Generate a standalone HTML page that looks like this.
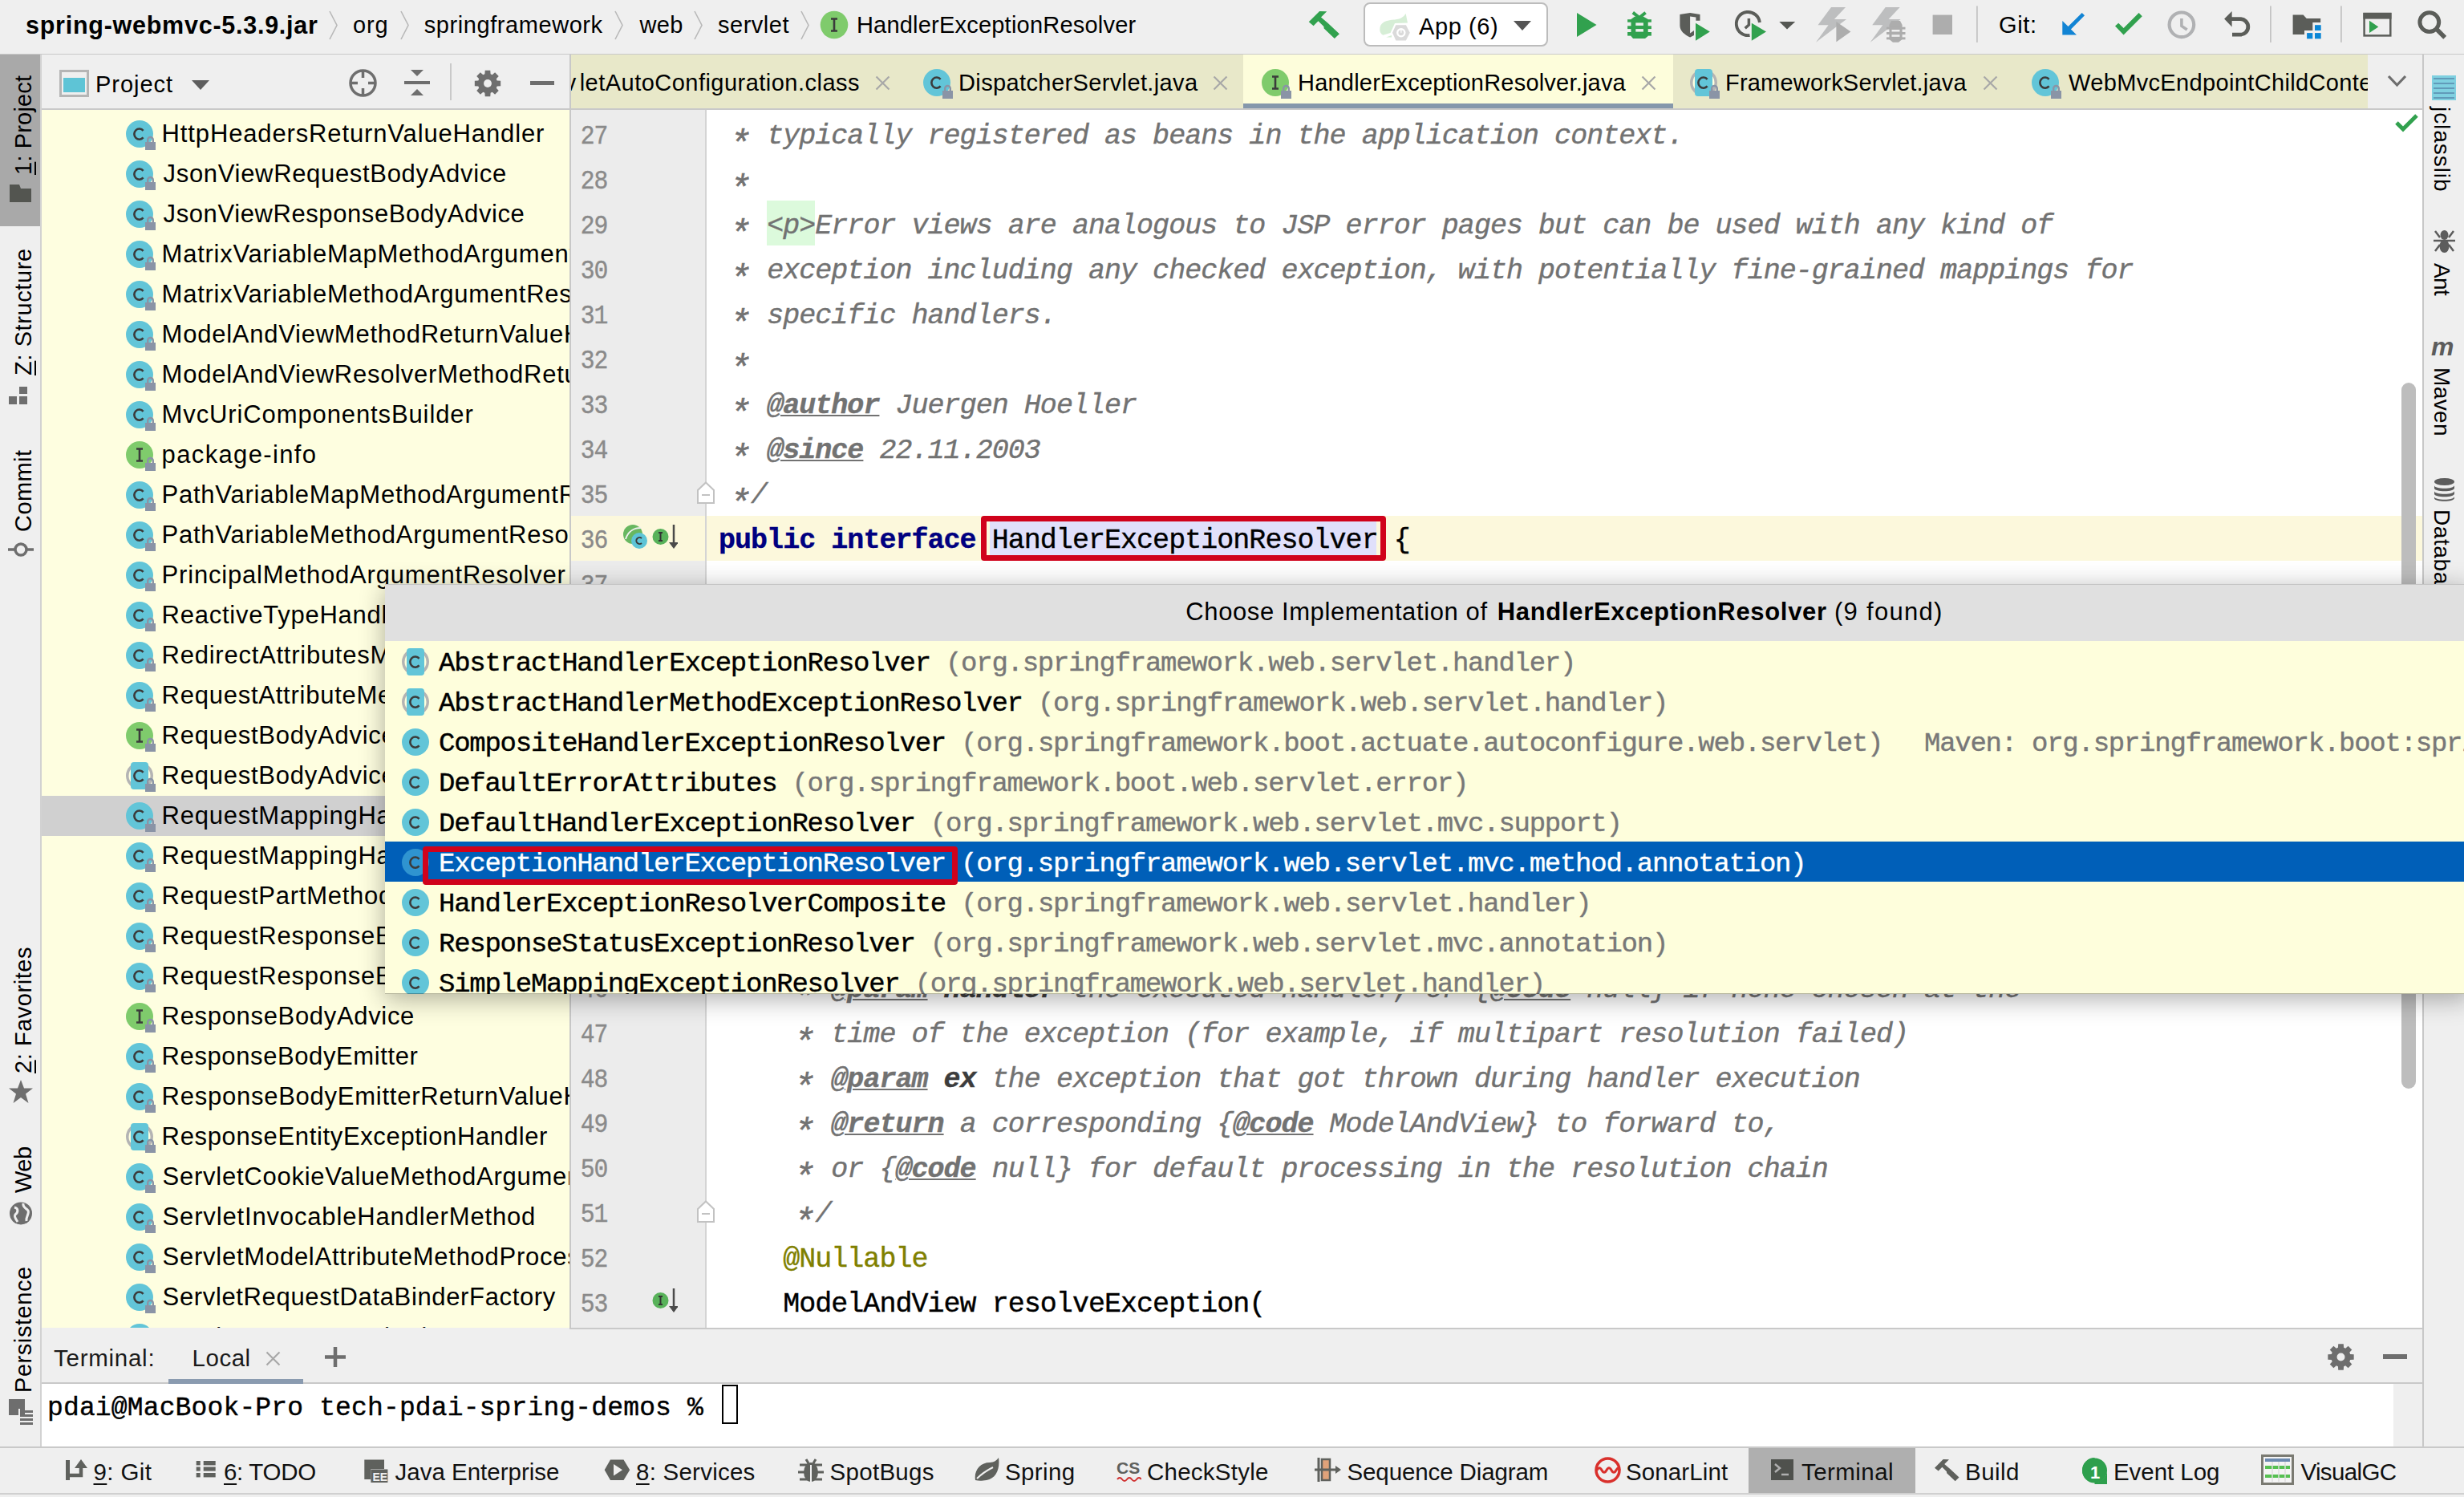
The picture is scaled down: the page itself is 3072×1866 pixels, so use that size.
<!DOCTYPE html>
<html><head><meta charset="utf-8"><style>
html,body{margin:0;padding:0;}
body{width:3072px;height:1866px;position:relative;overflow:hidden;background:#efefef;font-family:'Liberation Sans',sans-serif;}
body div, body svg{position:absolute;}

</style></head><body>
<div style="left:0px;top:0px;width:3072px;height:66px;background:#efefef;"></div>
<div style="left:0px;top:67px;width:3072px;height:2px;background:#c9c9c9;"></div>
<div style="left:0px;top:68px;width:50px;height:1736px;background:#efefef;"></div>
<div style="left:0px;top:68px;width:50px;height:214px;background:#a9a9a9;"></div>
<div style="left:50px;top:68px;width:2px;height:1736px;background:#d2d2d2;"></div>
<div style="left:52px;top:68px;width:659px;height:67px;background:#efefef;"></div>
<div style="left:52px;top:135px;width:659px;height:2px;background:#c9c9c9;"></div>
<div style="left:52px;top:137px;width:658px;height:1518px;background:#fefee0;"></div>
<div style="left:52px;top:992px;width:658px;height:50px;background:#d0d0d0;"></div>
<div style="left:710px;top:68px;width:2px;height:1589px;background:#c8c8c8;"></div>
<div style="left:712px;top:68px;width:2308px;height:67px;background:#efefef;"></div>
<div style="left:712px;top:68px;width:2240px;height:67px;background:#e8e8c9;"></div>
<div style="left:1550px;top:68px;width:536px;height:67px;background:#fdfddb;"></div>
<div style="left:1550px;top:129px;width:536px;height:7px;background:#8597ab;"></div>
<div style="left:712px;top:135px;width:2308px;height:2px;background:#c9c9c9;"></div>
<div style="left:712px;top:137px;width:167px;height:1518px;background:#ececec;"></div>
<div style="left:879px;top:137px;width:2px;height:1518px;background:#d4d4d4;"></div>
<div style="left:881px;top:137px;width:2139px;height:1518px;background:#ffffff;"></div>
<div style="left:712px;top:643px;width:167px;height:56px;background:#fcf8dc;"></div>
<div style="left:881px;top:643px;width:2139px;height:56px;background:#fcf8dc;"></div>
<div style="left:712px;top:1655px;width:2308px;height:2px;background:#c9c9c9;"></div>
<div style="left:3020px;top:68px;width:2px;height:1736px;background:#c8c8c8;"></div>
<div style="left:3022px;top:68px;width:50px;height:1736px;background:#efefef;"></div>
<div style="left:52px;top:1657px;width:2968px;height:66px;background:#efefef;"></div>
<div style="left:52px;top:1723px;width:2968px;height:2px;background:#c9c9c9;"></div>
<div style="left:52px;top:1725px;width:2932px;height:78px;background:#ffffff;"></div>
<div style="left:2984px;top:1725px;width:36px;height:78px;background:#efefef;"></div>
<div style="left:0px;top:1803px;width:3072px;height:2px;background:#c9c9c9;"></div>
<div style="left:0px;top:1805px;width:3072px;height:61px;background:#efefef;"></div>
<div style="left:2180px;top:1805px;width:208px;height:56px;background:#afafaf;"></div>
<div style="left:0px;top:1861px;width:3072px;height:2px;background:#d0d0d0;"></div>
<div style="left:32.00px;top:16.28px;font-family:'Liberation Sans';font-size:30.5px;line-height:30.5px;font-weight:bold;font-style:normal;color:#000;letter-spacing:0.745px;white-space:pre;">spring-webmvc-5.3.9.jar</div>
<svg style="left:410px;top:13px;" width="11" height="37" viewBox="0 0 11 37"><path d="M1 1 L10 18.5 L1 36" fill="none" stroke="#b8b8b8" stroke-width="1.6"/></svg>
<svg style="left:498.5px;top:13px;" width="11" height="37" viewBox="0 0 11 37"><path d="M1 1 L10 18.5 L1 36" fill="none" stroke="#b8b8b8" stroke-width="1.6"/></svg>
<svg style="left:766px;top:13px;" width="11" height="37" viewBox="0 0 11 37"><path d="M1 1 L10 18.5 L1 36" fill="none" stroke="#b8b8b8" stroke-width="1.6"/></svg>
<svg style="left:864.7px;top:13px;" width="11" height="37" viewBox="0 0 11 37"><path d="M1 1 L10 18.5 L1 36" fill="none" stroke="#b8b8b8" stroke-width="1.6"/></svg>
<svg style="left:998px;top:13px;" width="11" height="37" viewBox="0 0 11 37"><path d="M1 1 L10 18.5 L1 36" fill="none" stroke="#b8b8b8" stroke-width="1.6"/></svg>
<div style="left:440.00px;top:17.15px;font-family:'Liberation Sans';font-size:29px;line-height:29px;font-weight:normal;font-style:normal;color:#000;letter-spacing:0.807px;white-space:pre;">org</div>
<div style="left:528.80px;top:17.15px;font-family:'Liberation Sans';font-size:29px;line-height:29px;font-weight:normal;font-style:normal;color:#000;letter-spacing:0.568px;white-space:pre;">springframework</div>
<div style="left:797.60px;top:17.15px;font-family:'Liberation Sans';font-size:29px;line-height:29px;font-weight:normal;font-style:normal;color:#000;letter-spacing:0.264px;white-space:pre;">web</div>
<div style="left:895.00px;top:17.15px;font-family:'Liberation Sans';font-size:29px;line-height:29px;font-weight:normal;font-style:normal;color:#000;letter-spacing:0.507px;white-space:pre;">servlet</div>
<svg style="left:1020px;top:11px;" width="44" height="44" viewBox="0 0 44 44"><circle cx="20" cy="20" r="17.3" fill="#7fcb6c"/><path d="M16 12.5 h8 M20 12.5 v15 M16 27.5 h8" fill="none" stroke="#3b3b3b" stroke-width="2.6"/></svg>
<div style="left:1067.90px;top:17.15px;font-family:'Liberation Sans';font-size:29px;line-height:29px;font-weight:normal;font-style:normal;color:#000;letter-spacing:0.214px;white-space:pre;">HandlerExceptionResolver</div>
<svg style="left:0px;top:0px;" width="3072" height="66" viewBox="0 0 3072 66"><path d="M1631.75 27.3 L1645.1 14 L1654.2 14.3 L1647 21.5 L1655.8 29 L1669.9 42.2 L1663.8 48 L1650.7 35.6 L1650.4 33.1 L1643.5 26.2 L1637.6 32.2 Z" fill="#31a14e"/><path d="M1966 16 L1990.5 31 L1966 46 Z" fill="#31a14e"/><g transform="translate(2020,8)" fill="#31a14e"><path d="M15.8 7.7 L23.9 14 L31.6 7.7" fill="none" stroke="#31a14e" stroke-width="4"/><path d="M18 12.7 H29 L34.7 16 V37 L31 40 H16 L13.5 37 V16 Z"/><rect x="9.1" y="16.2" width="29.8" height="3.5"/><rect x="9.1" y="24.3" width="29.8" height="3.8"/><rect x="9.1" y="32" width="29.8" height="4.6"/><rect x="19.3" y="20.4" width="9.6" height="3.5" fill="#efefef"/><rect x="19.3" y="28.1" width="9.6" height="3.5" fill="#efefef"/></g><g transform="translate(2020,8)"><path d="M74.4 10 L87.1 8 L99.5 10 V17.7 H94.4 V13.6 L87.1 12.6 V33.5 L92 30 V36 L87.1 38.5 C80 35 74.4 30.5 74.4 24 Z" fill="#5b5d59"/><path d="M94 20.8 L111.8 31.5 L94 42.8 Z" fill="#31a14e"/><path d="M173.9 20 A14.6 14.6 0 1 0 161.5 36" fill="none" stroke="#5b5d59" stroke-width="3.9"/><path d="M160.4 15 V23 L155.7 27.3" fill="none" stroke="#5b5d59" stroke-width="3.5"/><path d="M163.8 20.8 L182 31.6 L163.8 42.8 Z" fill="#31a14e"/></g><path d="M2218.3 26.9 H2238.2 L2228 36.6 Z" fill="#555753"/><g transform="translate(2210,4)"><path d="M73 4.9 H91 L76.9 20 H92 L54 48.7 L69.6 27.3 H56.5 Z" fill="#bdbebf"/></g><g transform="translate(2277.7,4)"><path d="M73 4.9 H91 L76.9 20 H92 L54 48.7 L69.6 27.3 H56.5 Z" fill="#bdbebf"/></g><g transform="translate(2210,4)"><path d="M79.4 22.9 L97.4 35.5 L79.4 48.2 Z" fill="#adadad"/><path d="M148 21.9 H159 L161.6 27 V45 L157 48.7 H150 L145.4 45 V27 Z" fill="#adadad"/><rect x="142" y="29.7" width="23.5" height="2.9" fill="#adadad"/><rect x="142" y="36" width="23.5" height="3" fill="#adadad"/><rect x="142" y="42.4" width="23.5" height="2.9" fill="#adadad"/><rect x="148.5" y="33" width="10" height="2.5" fill="#efefef"/><rect x="148.5" y="39.3" width="10" height="2.5" fill="#efefef"/></g><rect x="2409.6" y="18.6" width="24.4" height="24.4" fill="#adadad"/><rect x="2464" y="7.4" width="1.8" height="45.5" fill="#c4c4c4"/><g transform="translate(2560,6)"><path d="M11.3 20 L18.5 26.9 L35.7 10 L39 13.2 L21.9 30.6 L29 37.5 H11.3 Z" fill="#1284d4"/><path d="M77 26.4 L81.2 22.7 L87.6 29 L106.6 10 L110.8 14.2 L87.6 37.5 Z" fill="#31a14e"/><circle cx="159.9" cy="24.8" r="15.3" fill="none" stroke="#b0b1b3" stroke-width="4.2"/><path d="M159.9 16.9 V26.4 L166.7 31.1" fill="none" stroke="#b0b1b3" stroke-width="3.6"/><path d="M222.6 7.9 L213.1 17.6 L222.6 27.4 Z" fill="#5b5d59"/><path d="M221 17.6 H233 A9.8 9.8 0 0 1 233 37.2 H223" fill="none" stroke="#5b5d59" stroke-width="4.8"/></g><rect x="2830" y="7.4" width="1.8" height="45.5" fill="#c4c4c4"/><g transform="translate(2850,6)"><path d="M8.6 12.6 H21.6 L25.7 17.1 H43.2 V22.1 H33.3 V32 H23 V36.9 H8.6 Z" fill="#5b5d59"/><g fill="#0a86d6"><rect x="36" y="25.2" width="7.7" height="6.8"/><rect x="26.1" y="35.1" width="7.2" height="7.2"/><rect x="36" y="35.1" width="7.7" height="7.2"/></g><rect x="68" y="1.4" width="1.8" height="45.4" fill="#c4c4c4"/><rect x="97.6" y="11.1" width="32.7" height="27.3" fill="none" stroke="#5b5d59" stroke-width="2.5"/><rect x="96.4" y="9.9" width="35.1" height="7.7" fill="#5b5d59"/><path d="M104 19.8 L115.3 27.5 L104 35.1 Z" fill="#31a14e"/><circle cx="178.8" cy="21.6" r="11.9" fill="none" stroke="#5b5d59" stroke-width="5"/><path d="M187.5 30 L198.2 40.8" stroke="#5b5d59" stroke-width="5.5"/></g></svg>
<div style="left:1700px;top:3px;width:226px;height:51px;border:2px solid #bcbcbc;border-radius:8px;background:#fff;"></div>
<svg style="left:1712px;top:10px;" width="50" height="45" viewBox="0 0 50 45"><path d="M8.3 27 C8 18 16 15 27 14.5 C35 14 39 10 40.6 6.8 L43 18.5 L27 19 L21.5 31 L12.3 33.8 C9.5 32 8.3 30 8.3 27 Z M16 36.6 L23 34 V36.6 Z" fill="#d6eed6"/><path d="M28.3 21.2 H40.9 L45.8 30.8 L40.9 40.6 H28.3 L24 30.8 Z" fill="#dadada"/><circle cx="34.8" cy="30.8" r="5.7" fill="#fff"/><circle cx="34.8" cy="30.8" r="3.4" fill="#dadada"/><rect x="34.3" y="26" width="1.2" height="4.8" fill="#fff"/></svg>
<div style="left:1769.00px;top:18.65px;font-family:'Liberation Sans';font-size:29px;line-height:29px;font-weight:normal;font-style:normal;color:#000;letter-spacing:0.593px;white-space:pre;">App (6)</div>
<svg style="left:1887px;top:26px;" width="22" height="12" viewBox="0 0 22 12"><path d="M0 0 H22 L11.0 12 Z" fill="#555"/></svg>
<div style="left:2492.00px;top:16.85px;font-family:'Liberation Sans';font-size:29px;line-height:29px;font-weight:normal;font-style:normal;color:#000;letter-spacing:0.648px;white-space:pre;">Git:</div>
<svg style="left:74px;top:87px;" width="37" height="34" viewBox="0 0 37 34"><rect x="1.5" y="1.5" width="34" height="31" fill="none" stroke="#b5b5b5" stroke-width="3"/><rect x="5" y="10" width="27" height="18" fill="#5ec4d6"/></svg>
<div style="left:119.00px;top:90.75px;font-family:'Liberation Sans';font-size:29px;line-height:29px;font-weight:normal;font-style:normal;color:#000;letter-spacing:0.967px;white-space:pre;">Project</div>
<svg style="left:239px;top:100px;" width="22" height="12" viewBox="0 0 22 12"><path d="M0 0 H22 L11.0 12 Z" fill="#5e5e5e"/></svg>
<svg style="left:434px;top:85px;" width="37" height="37" viewBox="0 0 37 37"><circle cx="18.5" cy="18.5" r="15.5" fill="none" stroke="#6e6e6e" stroke-width="3.5"/><path d="M18.5 3 V12 M18.5 25 V34 M3 18.5 H12 M25 18.5 H34" stroke="#6e6e6e" stroke-width="3.5"/></svg>
<svg style="left:504px;top:87px;" width="32" height="32" viewBox="0 0 32 32"><path d="M8 0 H24 L16 8 Z M8 32 H24 L16 24 Z" fill="#6e6e6e"/><rect x="0" y="14" width="32" height="4" fill="#6e6e6e"/></svg>
<div style="left:561px;top:79px;width:2px;height:46px;background:#c9c9c9;"></div>
<svg style="left:590px;top:86px;" width="36" height="36" viewBox="0 0 36 36"><path d="M29.66 14.39 L34.17 14.72 L34.17 21.28 L29.66 21.61 L28.80 23.70 L31.75 27.12 L27.12 31.75 L23.70 28.80 L21.61 29.66 L21.28 34.17 L14.72 34.17 L14.39 29.66 L12.30 28.80 L8.88 31.75 L4.25 27.12 L7.20 23.70 L6.34 21.61 L1.83 21.28 L1.83 14.72 L6.34 14.39 L7.20 12.30 L4.25 8.88 L8.88 4.25 L12.30 7.20 L14.39 6.34 L14.72 1.83 L21.28 1.83 L21.61 6.34 L23.70 7.20 L27.12 4.25 L31.75 8.88 L28.80 12.30 Z" fill="#6e6e6e"/><circle cx="18" cy="18" r="4.95" fill="#efefef"/></svg>
<div style="left:661px;top:101px;width:30px;height:4.5px;background:#6e6e6e;"></div>
<div style="left:0;top:0;width:3072px;height:1866px;clip-path:inset(68px 120px 1731px 712px);">
<div style="left:722.70px;top:89.35px;font-family:'Liberation Sans';font-size:29px;line-height:29px;font-weight:normal;font-style:normal;color:#000;letter-spacing:0.475px;white-space:pre;">letAutoConfiguration.class</div>
<div style="left:500.66px;top:89.35px;font-family:'Liberation Sans';font-size:29px;line-height:29px;font-weight:normal;font-style:normal;color:#000;letter-spacing:0.350px;white-space:pre;">DispatcherServv</div>
</div>
<svg style="left:1091px;top:94px;" width="19" height="19" viewBox="0 0 19 19"><path d="M1.5 1.5 L17.5 17.5 M17.5 1.5 L1.5 17.5" stroke="#a8a8a8" stroke-width="2.2"/></svg>
<svg style="left:1147.5px;top:83px;" width="44" height="44" viewBox="0 0 44 44"><circle cx="20" cy="20" r="17" fill="#62c5d8"/><path d="M24.6 15.8 A6.4 6.6 0 1 0 24.6 24.4" fill="none" stroke="#3b3b3b" stroke-width="2.6"/><path d="M30.2 30.5 v-3.2 a3.3 3.3 0 0 1 6.6 0 v3.2" fill="none" stroke="#8a94a6" stroke-width="2.4"/><rect x="27" y="30" width="13" height="10" fill="#8a94a6"/></svg>
<div style="left:1195.00px;top:89.35px;font-family:'Liberation Sans';font-size:29px;line-height:29px;font-weight:normal;font-style:normal;color:#000;letter-spacing:0.381px;white-space:pre;">DispatcherServlet.java</div>
<svg style="left:1512px;top:94px;" width="19" height="19" viewBox="0 0 19 19"><path d="M1.5 1.5 L17.5 17.5 M17.5 1.5 L1.5 17.5" stroke="#a8a8a8" stroke-width="2.2"/></svg>
<svg style="left:1570px;top:83px;" width="44" height="44" viewBox="0 0 44 44"><circle cx="20" cy="20" r="17" fill="#7fcb6c"/><path d="M16 12.5 h8 M20 12.5 v15 M16 27.5 h8" fill="none" stroke="#3b3b3b" stroke-width="2.6"/><path d="M30.2 30.5 v-3.2 a3.3 3.3 0 0 1 6.6 0 v3.2" fill="none" stroke="#8a94a6" stroke-width="2.4"/><rect x="27" y="30" width="13" height="10" fill="#8a94a6"/></svg>
<div style="left:1618.00px;top:89.35px;font-family:'Liberation Sans';font-size:29px;line-height:29px;font-weight:normal;font-style:normal;color:#000;letter-spacing:0.205px;white-space:pre;">HandlerExceptionResolver.java</div>
<svg style="left:2046px;top:94px;" width="19" height="19" viewBox="0 0 19 19"><path d="M1.5 1.5 L17.5 17.5 M17.5 1.5 L1.5 17.5" stroke="#a8a8a8" stroke-width="2.2"/></svg>
<svg style="left:2103.6px;top:83px;" width="44" height="44" viewBox="0 0 44 44"><circle cx="20" cy="20" r="17" fill="#b4b4b4"/><circle cx="20" cy="20" r="13.5" fill="#fefee0"/><rect x="9" y="3" width="22" height="34" rx="4" fill="#62c5d8"/><path d="M24.6 15.8 A6.4 6.6 0 1 0 24.6 24.4" fill="none" stroke="#3b3b3b" stroke-width="2.6"/><path d="M30.2 30.5 v-3.2 a3.3 3.3 0 0 1 6.6 0 v3.2" fill="none" stroke="#8a94a6" stroke-width="2.4"/><rect x="27" y="30" width="13" height="10" fill="#8a94a6"/></svg>
<div style="left:2151.00px;top:89.35px;font-family:'Liberation Sans';font-size:29px;line-height:29px;font-weight:normal;font-style:normal;color:#000;letter-spacing:0.205px;white-space:pre;">FrameworkServlet.java</div>
<svg style="left:2472px;top:94px;" width="19" height="19" viewBox="0 0 19 19"><path d="M1.5 1.5 L17.5 17.5 M17.5 1.5 L1.5 17.5" stroke="#a8a8a8" stroke-width="2.2"/></svg>
<svg style="left:2530px;top:83px;" width="44" height="44" viewBox="0 0 44 44"><circle cx="20" cy="20" r="17" fill="#62c5d8"/><path d="M24.6 15.8 A6.4 6.6 0 1 0 24.6 24.4" fill="none" stroke="#3b3b3b" stroke-width="2.6"/><path d="M30.2 30.5 v-3.2 a3.3 3.3 0 0 1 6.6 0 v3.2" fill="none" stroke="#8a94a6" stroke-width="2.4"/><rect x="27" y="30" width="13" height="10" fill="#8a94a6"/></svg>
<div style="left:0;top:0;width:3072px;height:1866px;clip-path:inset(68px 120px 1731px 712px);">
<div style="left:2579.00px;top:89.35px;font-family:'Liberation Sans';font-size:29px;line-height:29px;font-weight:normal;font-style:normal;color:#000;letter-spacing:0.350px;white-space:pre;">WebMvcEndpointChildContextConfiguration.class</div>
</div>
<svg style="left:2976px;top:93px;" width="25" height="16" viewBox="0 0 25 16"><path d="M2 2 L12.5 13 L23 2" fill="none" stroke="#6e6e6e" stroke-width="3.2"/></svg>
<div style="left:39.6px;top:215.7px;width:0;height:0;transform:rotate(-90deg);transform-origin:0 0;"><div style="left:-2.00px;top:-24.65px;font-family:'Liberation Sans';font-size:29px;line-height:29px;font-weight:normal;font-style:normal;color:#000;letter-spacing:0.173px;white-space:pre;"><span style="text-decoration:underline;text-decoration-thickness:2px;text-underline-offset:4px">1</span>: Project</div></div>
<svg style="left:12px;top:230px;" width="28" height="22" viewBox="0 0 28 22"><path d="M0 0 H12 L14 5 H27 V22 H0 Z" fill="#535550"/></svg>
<div style="left:39.6px;top:468px;width:0;height:0;transform:rotate(-90deg);transform-origin:0 0;"><div style="left:0.00px;top:-24.65px;font-family:'Liberation Sans';font-size:29px;line-height:29px;font-weight:normal;font-style:normal;color:#000;letter-spacing:0.604px;white-space:pre;"><span style="text-decoration:underline;text-decoration-thickness:2px;text-underline-offset:4px">Z</span>: Structure</div></div>
<svg style="left:11px;top:480px;" width="28" height="24" viewBox="0 0 28 24"><rect x="0" y="14" width="10" height="10" fill="#6e6e6e"/><rect x="13" y="14" width="10" height="10" fill="#6e6e6e"/><rect x="13" y="2" width="10" height="9" fill="#6e6e6e"/></svg>
<div style="left:39.6px;top:662px;width:0;height:0;transform:rotate(-90deg);transform-origin:0 0;"><div style="left:-1.00px;top:-24.65px;font-family:'Liberation Sans';font-size:29px;line-height:29px;font-weight:normal;font-style:normal;color:#000;letter-spacing:0.434px;white-space:pre;">Commit</div></div>
<svg style="left:10px;top:673px;" width="32" height="24" viewBox="0 0 32 24"><circle cx="16" cy="12" r="7" fill="none" stroke="#6e6e6e" stroke-width="3.5"/><path d="M0 12 H9 M23 12 H32" stroke="#6e6e6e" stroke-width="3.5"/></svg>
<div style="left:39.6px;top:1337px;width:0;height:0;transform:rotate(-90deg);transform-origin:0 0;"><div style="left:-1.00px;top:-24.65px;font-family:'Liberation Sans';font-size:29px;line-height:29px;font-weight:normal;font-style:normal;color:#000;letter-spacing:0.545px;white-space:pre;"><span style="text-decoration:underline;text-decoration-thickness:2px;text-underline-offset:4px">2</span>: Favorites</div></div>
<svg style="left:10px;top:1345px;" width="32" height="31" viewBox="0 0 32 31"><path d="M16 1 L20 11.5 L31 11.5 L22 18.5 L25.5 30 L16 23 L6.5 30 L10 18.5 L1 11.5 L12 11.5 Z" fill="#6e6e6e"/></svg>
<div style="left:39.6px;top:1487px;width:0;height:0;transform:rotate(-90deg);transform-origin:0 0;"><div style="left:0.00px;top:-24.65px;font-family:'Liberation Sans';font-size:29px;line-height:29px;font-weight:normal;font-style:normal;color:#000;letter-spacing:-0.488px;white-space:pre;">Web</div></div>
<svg style="left:11px;top:1497px;" width="30" height="31" viewBox="0 0 30 31"><circle cx="15" cy="15.5" r="14" fill="#6e6e6e"/><path d="M7 8 C12 9 12 14 8 17 C6 19 9 23 11 26 M18 3 C17 8 22 9 24 12 C26 16 21 19 22 25" fill="none" stroke="#efefef" stroke-width="3"/></svg>
<div style="left:39.6px;top:1734px;width:0;height:0;transform:rotate(-90deg);transform-origin:0 0;"><div style="left:-2.00px;top:-24.65px;font-family:'Liberation Sans';font-size:29px;line-height:29px;font-weight:normal;font-style:normal;color:#000;letter-spacing:0.561px;white-space:pre;">Persistence</div></div>
<svg style="left:11px;top:1744px;" width="30" height="33" viewBox="0 0 30 33"><rect x="0" y="0" width="20" height="20" fill="#6e6e6e"/><g fill="#6e6e6e"><rect x="14" y="14" width="16" height="3"/><rect x="14" y="19" width="16" height="3"/><rect x="14" y="24" width="16" height="3"/><rect x="14" y="29" width="16" height="3"/></g><rect x="12" y="12" width="2" height="21" fill="#efefef"/></svg>
<svg style="left:3032px;top:94px;" width="30" height="31" viewBox="0 0 30 31"><rect x="0" y="0" width="30" height="31" fill="#7fd0e0"/><g fill="#5a8fb0" opacity="0.8"><rect x="2" y="3" width="26" height="2"/><rect x="2" y="9" width="26" height="2"/><rect x="2" y="15" width="26" height="2"/><rect x="2" y="21" width="26" height="2"/><rect x="2" y="27" width="26" height="2"/></g></svg>
<div style="left:3034px;top:132px;width:0;height:0;transform:rotate(90deg);transform-origin:0 0;"><div style="left:1.00px;top:-23.80px;font-family:'Liberation Sans';font-size:28px;line-height:28px;font-weight:normal;font-style:normal;color:#000;letter-spacing:0.943px;white-space:pre;">jclasslib</div></div>
<svg style="left:3034px;top:286px;" width="27" height="29" viewBox="0 0 27 29"><ellipse cx="13.5" cy="7" rx="5" ry="6" fill="#5c5c5c"/><ellipse cx="13.5" cy="21" rx="6" ry="8" fill="#5c5c5c"/><path d="M2 2 L8 10 M25 2 L19 10 M0 14 H27 M2 27 L8 19 M25 27 L19 19" stroke="#5c5c5c" stroke-width="2.5" fill="none"/></svg>
<div style="left:3034px;top:328px;width:0;height:0;transform:rotate(90deg);transform-origin:0 0;"><div style="left:0.00px;top:-23.80px;font-family:'Liberation Sans';font-size:28px;line-height:28px;font-weight:normal;font-style:normal;color:#000;letter-spacing:-0.624px;white-space:pre;">Ant</div></div>
<svg style="left:3031px;top:421px;" width="34" height="24" viewBox="0 0 34 24"><text x="0" y="22" font-family="Liberation Sans" font-weight="bold" font-style="italic" font-size="32" fill="#5c5c5c">m</text></svg>
<div style="left:3034px;top:460px;width:0;height:0;transform:rotate(90deg);transform-origin:0 0;"><div style="left:-2.00px;top:-23.80px;font-family:'Liberation Sans';font-size:28px;line-height:28px;font-weight:normal;font-style:normal;color:#000;letter-spacing:0.383px;white-space:pre;">Maven</div></div>
<svg style="left:3034px;top:596px;" width="27" height="29" viewBox="0 0 27 29"><ellipse cx="13.5" cy="4.5" rx="12.5" ry="4.5" fill="#5c5c5c"/><path d="M1 9 C1 14 26 14 26 9 V12.5 C26 17.5 1 17.5 1 12.5 Z M1 16 C1 21 26 21 26 16 V19.5 C26 24.5 1 24.5 1 19.5 Z M1 23 C1 28 26 28 26 23 V25 C26 30 1 30 1 25 Z" fill="#5c5c5c"/></svg>
<div style="left:3034px;top:637px;width:0;height:0;transform:rotate(90deg);transform-origin:0 0;"><div style="left:-2.00px;top:-23.80px;font-family:'Liberation Sans';font-size:28px;line-height:28px;font-weight:normal;font-style:normal;color:#000;letter-spacing:0.600px;white-space:pre;">Database</div></div>
<div style="left:0;top:0;width:3072px;height:1866px;clip-path:inset(137px 2362px 211px 52px);">
<svg style="left:154px;top:147px;" width="44" height="44" viewBox="0 0 44 44"><circle cx="20" cy="20" r="17" fill="#62c5d8"/><path d="M24.6 15.8 A6.4 6.6 0 1 0 24.6 24.4" fill="none" stroke="#3b3b3b" stroke-width="2.6"/><path d="M30.2 30.5 v-3.2 a3.3 3.3 0 0 1 6.6 0 v3.2" fill="none" stroke="#8a94a6" stroke-width="2.4"/><rect x="27" y="30" width="13" height="10" fill="#8a94a6"/></svg>
<div style="left:201.60px;top:150.65px;font-family:'Liberation Sans';font-size:31px;line-height:31px;font-weight:normal;font-style:normal;color:#000;letter-spacing:0.861px;white-space:pre;">HttpHeadersReturnValueHandler</div>
<svg style="left:154px;top:197px;" width="44" height="44" viewBox="0 0 44 44"><circle cx="20" cy="20" r="17" fill="#62c5d8"/><path d="M24.6 15.8 A6.4 6.6 0 1 0 24.6 24.4" fill="none" stroke="#3b3b3b" stroke-width="2.6"/><path d="M30.2 30.5 v-3.2 a3.3 3.3 0 0 1 6.6 0 v3.2" fill="none" stroke="#8a94a6" stroke-width="2.4"/><rect x="27" y="30" width="13" height="10" fill="#8a94a6"/></svg>
<div style="left:203.60px;top:200.65px;font-family:'Liberation Sans';font-size:31px;line-height:31px;font-weight:normal;font-style:normal;color:#000;letter-spacing:0.678px;white-space:pre;">JsonViewRequestBodyAdvice</div>
<svg style="left:154px;top:247px;" width="44" height="44" viewBox="0 0 44 44"><circle cx="20" cy="20" r="17" fill="#62c5d8"/><path d="M24.6 15.8 A6.4 6.6 0 1 0 24.6 24.4" fill="none" stroke="#3b3b3b" stroke-width="2.6"/><path d="M30.2 30.5 v-3.2 a3.3 3.3 0 0 1 6.6 0 v3.2" fill="none" stroke="#8a94a6" stroke-width="2.4"/><rect x="27" y="30" width="13" height="10" fill="#8a94a6"/></svg>
<div style="left:203.60px;top:250.65px;font-family:'Liberation Sans';font-size:31px;line-height:31px;font-weight:normal;font-style:normal;color:#000;letter-spacing:0.593px;white-space:pre;">JsonViewResponseBodyAdvice</div>
<svg style="left:154px;top:297px;" width="44" height="44" viewBox="0 0 44 44"><circle cx="20" cy="20" r="17" fill="#62c5d8"/><path d="M24.6 15.8 A6.4 6.6 0 1 0 24.6 24.4" fill="none" stroke="#3b3b3b" stroke-width="2.6"/><path d="M30.2 30.5 v-3.2 a3.3 3.3 0 0 1 6.6 0 v3.2" fill="none" stroke="#8a94a6" stroke-width="2.4"/><rect x="27" y="30" width="13" height="10" fill="#8a94a6"/></svg>
<div style="left:201.60px;top:300.65px;font-family:'Liberation Sans';font-size:31px;line-height:31px;font-weight:normal;font-style:normal;color:#000;letter-spacing:0.750px;white-space:pre;">MatrixVariableMapMethodArgumentResolver</div>
<svg style="left:154px;top:347px;" width="44" height="44" viewBox="0 0 44 44"><circle cx="20" cy="20" r="17" fill="#62c5d8"/><path d="M24.6 15.8 A6.4 6.6 0 1 0 24.6 24.4" fill="none" stroke="#3b3b3b" stroke-width="2.6"/><path d="M30.2 30.5 v-3.2 a3.3 3.3 0 0 1 6.6 0 v3.2" fill="none" stroke="#8a94a6" stroke-width="2.4"/><rect x="27" y="30" width="13" height="10" fill="#8a94a6"/></svg>
<div style="left:201.60px;top:350.65px;font-family:'Liberation Sans';font-size:31px;line-height:31px;font-weight:normal;font-style:normal;color:#000;letter-spacing:0.750px;white-space:pre;">MatrixVariableMethodArgumentResolver</div>
<svg style="left:154px;top:397px;" width="44" height="44" viewBox="0 0 44 44"><circle cx="20" cy="20" r="17" fill="#62c5d8"/><path d="M24.6 15.8 A6.4 6.6 0 1 0 24.6 24.4" fill="none" stroke="#3b3b3b" stroke-width="2.6"/><path d="M30.2 30.5 v-3.2 a3.3 3.3 0 0 1 6.6 0 v3.2" fill="none" stroke="#8a94a6" stroke-width="2.4"/><rect x="27" y="30" width="13" height="10" fill="#8a94a6"/></svg>
<div style="left:201.60px;top:400.65px;font-family:'Liberation Sans';font-size:31px;line-height:31px;font-weight:normal;font-style:normal;color:#000;letter-spacing:0.750px;white-space:pre;">ModelAndViewMethodReturnValueHandler</div>
<svg style="left:154px;top:447px;" width="44" height="44" viewBox="0 0 44 44"><circle cx="20" cy="20" r="17" fill="#62c5d8"/><path d="M24.6 15.8 A6.4 6.6 0 1 0 24.6 24.4" fill="none" stroke="#3b3b3b" stroke-width="2.6"/><path d="M30.2 30.5 v-3.2 a3.3 3.3 0 0 1 6.6 0 v3.2" fill="none" stroke="#8a94a6" stroke-width="2.4"/><rect x="27" y="30" width="13" height="10" fill="#8a94a6"/></svg>
<div style="left:201.60px;top:450.65px;font-family:'Liberation Sans';font-size:31px;line-height:31px;font-weight:normal;font-style:normal;color:#000;letter-spacing:0.750px;white-space:pre;">ModelAndViewResolverMethodReturnValueHandler</div>
<svg style="left:154px;top:497px;" width="44" height="44" viewBox="0 0 44 44"><circle cx="20" cy="20" r="17" fill="#62c5d8"/><path d="M24.6 15.8 A6.4 6.6 0 1 0 24.6 24.4" fill="none" stroke="#3b3b3b" stroke-width="2.6"/><path d="M30.2 30.5 v-3.2 a3.3 3.3 0 0 1 6.6 0 v3.2" fill="none" stroke="#8a94a6" stroke-width="2.4"/><rect x="27" y="30" width="13" height="10" fill="#8a94a6"/></svg>
<div style="left:201.60px;top:500.65px;font-family:'Liberation Sans';font-size:31px;line-height:31px;font-weight:normal;font-style:normal;color:#000;letter-spacing:0.884px;white-space:pre;">MvcUriComponentsBuilder</div>
<svg style="left:154px;top:547px;" width="44" height="44" viewBox="0 0 44 44"><circle cx="20" cy="20" r="17" fill="#7fcb6c"/><path d="M16 12.5 h8 M20 12.5 v15 M16 27.5 h8" fill="none" stroke="#3b3b3b" stroke-width="2.6"/><path d="M30.2 30.5 v-3.2 a3.3 3.3 0 0 1 6.6 0 v3.2" fill="none" stroke="#8a94a6" stroke-width="2.4"/><rect x="27" y="30" width="13" height="10" fill="#8a94a6"/></svg>
<div style="left:201.60px;top:550.65px;font-family:'Liberation Sans';font-size:31px;line-height:31px;font-weight:normal;font-style:normal;color:#000;letter-spacing:1.357px;white-space:pre;">package-info</div>
<svg style="left:154px;top:597px;" width="44" height="44" viewBox="0 0 44 44"><circle cx="20" cy="20" r="17" fill="#62c5d8"/><path d="M24.6 15.8 A6.4 6.6 0 1 0 24.6 24.4" fill="none" stroke="#3b3b3b" stroke-width="2.6"/><path d="M30.2 30.5 v-3.2 a3.3 3.3 0 0 1 6.6 0 v3.2" fill="none" stroke="#8a94a6" stroke-width="2.4"/><rect x="27" y="30" width="13" height="10" fill="#8a94a6"/></svg>
<div style="left:201.60px;top:600.65px;font-family:'Liberation Sans';font-size:31px;line-height:31px;font-weight:normal;font-style:normal;color:#000;letter-spacing:0.750px;white-space:pre;">PathVariableMapMethodArgumentResolver</div>
<svg style="left:154px;top:647px;" width="44" height="44" viewBox="0 0 44 44"><circle cx="20" cy="20" r="17" fill="#62c5d8"/><path d="M24.6 15.8 A6.4 6.6 0 1 0 24.6 24.4" fill="none" stroke="#3b3b3b" stroke-width="2.6"/><path d="M30.2 30.5 v-3.2 a3.3 3.3 0 0 1 6.6 0 v3.2" fill="none" stroke="#8a94a6" stroke-width="2.4"/><rect x="27" y="30" width="13" height="10" fill="#8a94a6"/></svg>
<div style="left:201.60px;top:650.65px;font-family:'Liberation Sans';font-size:31px;line-height:31px;font-weight:normal;font-style:normal;color:#000;letter-spacing:0.750px;white-space:pre;">PathVariableMethodArgumentResolver</div>
<svg style="left:154px;top:697px;" width="44" height="44" viewBox="0 0 44 44"><circle cx="20" cy="20" r="17" fill="#62c5d8"/><path d="M24.6 15.8 A6.4 6.6 0 1 0 24.6 24.4" fill="none" stroke="#3b3b3b" stroke-width="2.6"/><path d="M30.2 30.5 v-3.2 a3.3 3.3 0 0 1 6.6 0 v3.2" fill="none" stroke="#8a94a6" stroke-width="2.4"/><rect x="27" y="30" width="13" height="10" fill="#8a94a6"/></svg>
<div style="left:201.60px;top:700.65px;font-family:'Liberation Sans';font-size:31px;line-height:31px;font-weight:normal;font-style:normal;color:#000;letter-spacing:0.811px;white-space:pre;">PrincipalMethodArgumentResolver</div>
<svg style="left:154px;top:747px;" width="44" height="44" viewBox="0 0 44 44"><circle cx="20" cy="20" r="17" fill="#62c5d8"/><path d="M24.6 15.8 A6.4 6.6 0 1 0 24.6 24.4" fill="none" stroke="#3b3b3b" stroke-width="2.6"/><path d="M30.2 30.5 v-3.2 a3.3 3.3 0 0 1 6.6 0 v3.2" fill="none" stroke="#8a94a6" stroke-width="2.4"/><rect x="27" y="30" width="13" height="10" fill="#8a94a6"/></svg>
<div style="left:201.60px;top:750.65px;font-family:'Liberation Sans';font-size:31px;line-height:31px;font-weight:normal;font-style:normal;color:#000;letter-spacing:0.750px;white-space:pre;">ReactiveTypeHandler</div>
<svg style="left:154px;top:797px;" width="44" height="44" viewBox="0 0 44 44"><circle cx="20" cy="20" r="17" fill="#62c5d8"/><path d="M24.6 15.8 A6.4 6.6 0 1 0 24.6 24.4" fill="none" stroke="#3b3b3b" stroke-width="2.6"/><path d="M30.2 30.5 v-3.2 a3.3 3.3 0 0 1 6.6 0 v3.2" fill="none" stroke="#8a94a6" stroke-width="2.4"/><rect x="27" y="30" width="13" height="10" fill="#8a94a6"/></svg>
<div style="left:201.60px;top:800.65px;font-family:'Liberation Sans';font-size:31px;line-height:31px;font-weight:normal;font-style:normal;color:#000;letter-spacing:0.750px;white-space:pre;">RedirectAttributesMethodArgumentResolver</div>
<svg style="left:154px;top:847px;" width="44" height="44" viewBox="0 0 44 44"><circle cx="20" cy="20" r="17" fill="#62c5d8"/><path d="M24.6 15.8 A6.4 6.6 0 1 0 24.6 24.4" fill="none" stroke="#3b3b3b" stroke-width="2.6"/><path d="M30.2 30.5 v-3.2 a3.3 3.3 0 0 1 6.6 0 v3.2" fill="none" stroke="#8a94a6" stroke-width="2.4"/><rect x="27" y="30" width="13" height="10" fill="#8a94a6"/></svg>
<div style="left:201.60px;top:850.65px;font-family:'Liberation Sans';font-size:31px;line-height:31px;font-weight:normal;font-style:normal;color:#000;letter-spacing:0.750px;white-space:pre;">RequestAttributeMethodArgumentResolver</div>
<svg style="left:154px;top:897px;" width="44" height="44" viewBox="0 0 44 44"><circle cx="20" cy="20" r="17" fill="#7fcb6c"/><path d="M16 12.5 h8 M20 12.5 v15 M16 27.5 h8" fill="none" stroke="#3b3b3b" stroke-width="2.6"/><path d="M30.2 30.5 v-3.2 a3.3 3.3 0 0 1 6.6 0 v3.2" fill="none" stroke="#8a94a6" stroke-width="2.4"/><rect x="27" y="30" width="13" height="10" fill="#8a94a6"/></svg>
<div style="left:201.60px;top:900.65px;font-family:'Liberation Sans';font-size:31px;line-height:31px;font-weight:normal;font-style:normal;color:#000;letter-spacing:0.750px;white-space:pre;">RequestBodyAdvice</div>
<svg style="left:154px;top:947px;" width="44" height="44" viewBox="0 0 44 44"><circle cx="20" cy="20" r="17" fill="#b4b4b4"/><circle cx="20" cy="20" r="13.5" fill="#fefee0"/><rect x="9" y="3" width="22" height="34" rx="4" fill="#62c5d8"/><path d="M24.6 15.8 A6.4 6.6 0 1 0 24.6 24.4" fill="none" stroke="#3b3b3b" stroke-width="2.6"/><path d="M30.2 30.5 v-3.2 a3.3 3.3 0 0 1 6.6 0 v3.2" fill="none" stroke="#8a94a6" stroke-width="2.4"/><rect x="27" y="30" width="13" height="10" fill="#8a94a6"/></svg>
<div style="left:201.60px;top:950.65px;font-family:'Liberation Sans';font-size:31px;line-height:31px;font-weight:normal;font-style:normal;color:#000;letter-spacing:0.750px;white-space:pre;">RequestBodyAdviceAdapter</div>
<svg style="left:154px;top:997px;" width="44" height="44" viewBox="0 0 44 44"><circle cx="20" cy="20" r="17" fill="#62c5d8"/><path d="M24.6 15.8 A6.4 6.6 0 1 0 24.6 24.4" fill="none" stroke="#3b3b3b" stroke-width="2.6"/><path d="M30.2 30.5 v-3.2 a3.3 3.3 0 0 1 6.6 0 v3.2" fill="none" stroke="#8a94a6" stroke-width="2.4"/><rect x="27" y="30" width="13" height="10" fill="#8a94a6"/></svg>
<div style="left:201.60px;top:1000.65px;font-family:'Liberation Sans';font-size:31px;line-height:31px;font-weight:normal;font-style:normal;color:#000;letter-spacing:0.750px;white-space:pre;">RequestMappingHandlerAdapter</div>
<svg style="left:154px;top:1047px;" width="44" height="44" viewBox="0 0 44 44"><circle cx="20" cy="20" r="17" fill="#62c5d8"/><path d="M24.6 15.8 A6.4 6.6 0 1 0 24.6 24.4" fill="none" stroke="#3b3b3b" stroke-width="2.6"/><path d="M30.2 30.5 v-3.2 a3.3 3.3 0 0 1 6.6 0 v3.2" fill="none" stroke="#8a94a6" stroke-width="2.4"/><rect x="27" y="30" width="13" height="10" fill="#8a94a6"/></svg>
<div style="left:201.60px;top:1050.65px;font-family:'Liberation Sans';font-size:31px;line-height:31px;font-weight:normal;font-style:normal;color:#000;letter-spacing:0.750px;white-space:pre;">RequestMappingHandlerMapping</div>
<svg style="left:154px;top:1097px;" width="44" height="44" viewBox="0 0 44 44"><circle cx="20" cy="20" r="17" fill="#62c5d8"/><path d="M24.6 15.8 A6.4 6.6 0 1 0 24.6 24.4" fill="none" stroke="#3b3b3b" stroke-width="2.6"/><path d="M30.2 30.5 v-3.2 a3.3 3.3 0 0 1 6.6 0 v3.2" fill="none" stroke="#8a94a6" stroke-width="2.4"/><rect x="27" y="30" width="13" height="10" fill="#8a94a6"/></svg>
<div style="left:201.60px;top:1100.65px;font-family:'Liberation Sans';font-size:31px;line-height:31px;font-weight:normal;font-style:normal;color:#000;letter-spacing:0.750px;white-space:pre;">RequestPartMethodArgumentResolver</div>
<svg style="left:154px;top:1147px;" width="44" height="44" viewBox="0 0 44 44"><circle cx="20" cy="20" r="17" fill="#62c5d8"/><path d="M24.6 15.8 A6.4 6.6 0 1 0 24.6 24.4" fill="none" stroke="#3b3b3b" stroke-width="2.6"/><path d="M30.2 30.5 v-3.2 a3.3 3.3 0 0 1 6.6 0 v3.2" fill="none" stroke="#8a94a6" stroke-width="2.4"/><rect x="27" y="30" width="13" height="10" fill="#8a94a6"/></svg>
<div style="left:201.60px;top:1150.65px;font-family:'Liberation Sans';font-size:31px;line-height:31px;font-weight:normal;font-style:normal;color:#000;letter-spacing:0.750px;white-space:pre;">RequestResponseBodyAdviceChain</div>
<svg style="left:154px;top:1197px;" width="44" height="44" viewBox="0 0 44 44"><circle cx="20" cy="20" r="17" fill="#62c5d8"/><path d="M24.6 15.8 A6.4 6.6 0 1 0 24.6 24.4" fill="none" stroke="#3b3b3b" stroke-width="2.6"/><path d="M30.2 30.5 v-3.2 a3.3 3.3 0 0 1 6.6 0 v3.2" fill="none" stroke="#8a94a6" stroke-width="2.4"/><rect x="27" y="30" width="13" height="10" fill="#8a94a6"/></svg>
<div style="left:201.60px;top:1200.65px;font-family:'Liberation Sans';font-size:31px;line-height:31px;font-weight:normal;font-style:normal;color:#000;letter-spacing:0.750px;white-space:pre;">RequestResponseBodyMethodProcessor</div>
<svg style="left:154px;top:1247px;" width="44" height="44" viewBox="0 0 44 44"><circle cx="20" cy="20" r="17" fill="#7fcb6c"/><path d="M16 12.5 h8 M20 12.5 v15 M16 27.5 h8" fill="none" stroke="#3b3b3b" stroke-width="2.6"/><path d="M30.2 30.5 v-3.2 a3.3 3.3 0 0 1 6.6 0 v3.2" fill="none" stroke="#8a94a6" stroke-width="2.4"/><rect x="27" y="30" width="13" height="10" fill="#8a94a6"/></svg>
<div style="left:201.60px;top:1250.65px;font-family:'Liberation Sans';font-size:31px;line-height:31px;font-weight:normal;font-style:normal;color:#000;letter-spacing:0.673px;white-space:pre;">ResponseBodyAdvice</div>
<svg style="left:154px;top:1297px;" width="44" height="44" viewBox="0 0 44 44"><circle cx="20" cy="20" r="17" fill="#62c5d8"/><path d="M24.6 15.8 A6.4 6.6 0 1 0 24.6 24.4" fill="none" stroke="#3b3b3b" stroke-width="2.6"/><path d="M30.2 30.5 v-3.2 a3.3 3.3 0 0 1 6.6 0 v3.2" fill="none" stroke="#8a94a6" stroke-width="2.4"/><rect x="27" y="30" width="13" height="10" fill="#8a94a6"/></svg>
<div style="left:201.60px;top:1300.65px;font-family:'Liberation Sans';font-size:31px;line-height:31px;font-weight:normal;font-style:normal;color:#000;letter-spacing:0.600px;white-space:pre;">ResponseBodyEmitter</div>
<svg style="left:154px;top:1347px;" width="44" height="44" viewBox="0 0 44 44"><circle cx="20" cy="20" r="17" fill="#62c5d8"/><path d="M24.6 15.8 A6.4 6.6 0 1 0 24.6 24.4" fill="none" stroke="#3b3b3b" stroke-width="2.6"/><path d="M30.2 30.5 v-3.2 a3.3 3.3 0 0 1 6.6 0 v3.2" fill="none" stroke="#8a94a6" stroke-width="2.4"/><rect x="27" y="30" width="13" height="10" fill="#8a94a6"/></svg>
<div style="left:201.60px;top:1350.65px;font-family:'Liberation Sans';font-size:31px;line-height:31px;font-weight:normal;font-style:normal;color:#000;letter-spacing:0.750px;white-space:pre;">ResponseBodyEmitterReturnValueHandler</div>
<svg style="left:154px;top:1397px;" width="44" height="44" viewBox="0 0 44 44"><circle cx="20" cy="20" r="17" fill="#b4b4b4"/><circle cx="20" cy="20" r="13.5" fill="#fefee0"/><rect x="9" y="3" width="22" height="34" rx="4" fill="#62c5d8"/><path d="M24.6 15.8 A6.4 6.6 0 1 0 24.6 24.4" fill="none" stroke="#3b3b3b" stroke-width="2.6"/><path d="M30.2 30.5 v-3.2 a3.3 3.3 0 0 1 6.6 0 v3.2" fill="none" stroke="#8a94a6" stroke-width="2.4"/><rect x="27" y="30" width="13" height="10" fill="#8a94a6"/></svg>
<div style="left:201.60px;top:1400.65px;font-family:'Liberation Sans';font-size:31px;line-height:31px;font-weight:normal;font-style:normal;color:#000;letter-spacing:0.655px;white-space:pre;">ResponseEntityExceptionHandler</div>
<svg style="left:154px;top:1447px;" width="44" height="44" viewBox="0 0 44 44"><circle cx="20" cy="20" r="17" fill="#62c5d8"/><path d="M24.6 15.8 A6.4 6.6 0 1 0 24.6 24.4" fill="none" stroke="#3b3b3b" stroke-width="2.6"/><path d="M30.2 30.5 v-3.2 a3.3 3.3 0 0 1 6.6 0 v3.2" fill="none" stroke="#8a94a6" stroke-width="2.4"/><rect x="27" y="30" width="13" height="10" fill="#8a94a6"/></svg>
<div style="left:202.60px;top:1450.65px;font-family:'Liberation Sans';font-size:31px;line-height:31px;font-weight:normal;font-style:normal;color:#000;letter-spacing:0.750px;white-space:pre;">ServletCookieValueMethodArgumentResolver</div>
<svg style="left:154px;top:1497px;" width="44" height="44" viewBox="0 0 44 44"><circle cx="20" cy="20" r="17" fill="#62c5d8"/><path d="M24.6 15.8 A6.4 6.6 0 1 0 24.6 24.4" fill="none" stroke="#3b3b3b" stroke-width="2.6"/><path d="M30.2 30.5 v-3.2 a3.3 3.3 0 0 1 6.6 0 v3.2" fill="none" stroke="#8a94a6" stroke-width="2.4"/><rect x="27" y="30" width="13" height="10" fill="#8a94a6"/></svg>
<div style="left:202.60px;top:1500.65px;font-family:'Liberation Sans';font-size:31px;line-height:31px;font-weight:normal;font-style:normal;color:#000;letter-spacing:0.843px;white-space:pre;">ServletInvocableHandlerMethod</div>
<svg style="left:154px;top:1547px;" width="44" height="44" viewBox="0 0 44 44"><circle cx="20" cy="20" r="17" fill="#62c5d8"/><path d="M24.6 15.8 A6.4 6.6 0 1 0 24.6 24.4" fill="none" stroke="#3b3b3b" stroke-width="2.6"/><path d="M30.2 30.5 v-3.2 a3.3 3.3 0 0 1 6.6 0 v3.2" fill="none" stroke="#8a94a6" stroke-width="2.4"/><rect x="27" y="30" width="13" height="10" fill="#8a94a6"/></svg>
<div style="left:202.60px;top:1550.65px;font-family:'Liberation Sans';font-size:31px;line-height:31px;font-weight:normal;font-style:normal;color:#000;letter-spacing:0.750px;white-space:pre;">ServletModelAttributeMethodProcessor</div>
<svg style="left:154px;top:1597px;" width="44" height="44" viewBox="0 0 44 44"><circle cx="20" cy="20" r="17" fill="#62c5d8"/><path d="M24.6 15.8 A6.4 6.6 0 1 0 24.6 24.4" fill="none" stroke="#3b3b3b" stroke-width="2.6"/><path d="M30.2 30.5 v-3.2 a3.3 3.3 0 0 1 6.6 0 v3.2" fill="none" stroke="#8a94a6" stroke-width="2.4"/><rect x="27" y="30" width="13" height="10" fill="#8a94a6"/></svg>
<div style="left:202.60px;top:1600.65px;font-family:'Liberation Sans';font-size:31px;line-height:31px;font-weight:normal;font-style:normal;color:#000;letter-spacing:0.644px;white-space:pre;">ServletRequestDataBinderFactory</div>
<svg style="left:154px;top:1647px;" width="44" height="44" viewBox="0 0 44 44"><circle cx="20" cy="20" r="17" fill="#62c5d8"/><path d="M24.6 15.8 A6.4 6.6 0 1 0 24.6 24.4" fill="none" stroke="#3b3b3b" stroke-width="2.6"/><path d="M30.2 30.5 v-3.2 a3.3 3.3 0 0 1 6.6 0 v3.2" fill="none" stroke="#8a94a6" stroke-width="2.4"/><rect x="27" y="30" width="13" height="10" fill="#8a94a6"/></svg>
<div style="left:202.60px;top:1650.65px;font-family:'Liberation Sans';font-size:31px;line-height:31px;font-weight:normal;font-style:normal;color:#000;letter-spacing:0.750px;white-space:pre;">ServletRequestMethodArgumentResolver</div>
</div>
<div style="left:956.12px;top:250px;width:60.12px;height:56px;background:#dcfadc;"></div>
<div style="left:1234px;top:649px;width:482px;height:43px;background:#e0e0fb;"></div>
<div style="left:896.00px;top:152.90px;font-family:'Liberation Mono';font-size:35px;line-height:35px;letter-spacing:-0.963px;white-space:pre;color:#000;-webkit-text-stroke:0.4px currentColor;"><span style="color:#727272;font-style:italic"> <span style="display:inline-block;transform:translate(-4px,12px) scale(1.3)">*</span> typically registered as beans in the application context.</span></div>
<div style="left:896.00px;top:208.90px;font-family:'Liberation Mono';font-size:35px;line-height:35px;letter-spacing:-0.963px;white-space:pre;color:#000;-webkit-text-stroke:0.4px currentColor;"><span style="color:#727272;font-style:italic"> <span style="display:inline-block;transform:translate(-4px,12px) scale(1.3)">*</span></span></div>
<div style="left:896.00px;top:264.90px;font-family:'Liberation Mono';font-size:35px;line-height:35px;letter-spacing:-0.963px;white-space:pre;color:#000;-webkit-text-stroke:0.4px currentColor;"><span style="color:#727272;font-style:italic"> <span style="display:inline-block;transform:translate(-4px,12px) scale(1.3)">*</span> &lt;p&gt;Error views are analogous to JSP error pages but can be used with any kind of</span></div>
<div style="left:896.00px;top:320.90px;font-family:'Liberation Mono';font-size:35px;line-height:35px;letter-spacing:-0.963px;white-space:pre;color:#000;-webkit-text-stroke:0.4px currentColor;"><span style="color:#727272;font-style:italic"> <span style="display:inline-block;transform:translate(-4px,12px) scale(1.3)">*</span> exception including any checked exception, with potentially fine-grained mappings for</span></div>
<div style="left:896.00px;top:376.90px;font-family:'Liberation Mono';font-size:35px;line-height:35px;letter-spacing:-0.963px;white-space:pre;color:#000;-webkit-text-stroke:0.4px currentColor;"><span style="color:#727272;font-style:italic"> <span style="display:inline-block;transform:translate(-4px,12px) scale(1.3)">*</span> specific handlers.</span></div>
<div style="left:896.00px;top:432.90px;font-family:'Liberation Mono';font-size:35px;line-height:35px;letter-spacing:-0.963px;white-space:pre;color:#000;-webkit-text-stroke:0.4px currentColor;"><span style="color:#727272;font-style:italic"> <span style="display:inline-block;transform:translate(-4px,12px) scale(1.3)">*</span></span></div>
<div style="left:896.00px;top:488.90px;font-family:'Liberation Mono';font-size:35px;line-height:35px;letter-spacing:-0.963px;white-space:pre;color:#000;-webkit-text-stroke:0.4px currentColor;"><span style="color:#727272;font-style:italic"> <span style="display:inline-block;transform:translate(-4px,12px) scale(1.3)">*</span> </span><span style="color:#727272;font-style:italic;font-weight:bold;text-decoration:underline;text-decoration-thickness:2px;text-underline-offset:2px">@author</span><span style="color:#727272;font-style:italic"> Juergen Hoeller</span></div>
<div style="left:896.00px;top:544.90px;font-family:'Liberation Mono';font-size:35px;line-height:35px;letter-spacing:-0.963px;white-space:pre;color:#000;-webkit-text-stroke:0.4px currentColor;"><span style="color:#727272;font-style:italic"> <span style="display:inline-block;transform:translate(-4px,12px) scale(1.3)">*</span> </span><span style="color:#727272;font-style:italic;font-weight:bold;text-decoration:underline;text-decoration-thickness:2px;text-underline-offset:2px">@since</span><span style="color:#727272;font-style:italic"> 22.11.2003</span></div>
<div style="left:896.00px;top:600.90px;font-family:'Liberation Mono';font-size:35px;line-height:35px;letter-spacing:-0.963px;white-space:pre;color:#000;-webkit-text-stroke:0.4px currentColor;"><span style="color:#727272;font-style:italic"> <span style="display:inline-block;transform:translate(-4px,12px) scale(1.3)">*</span>/</span></div>
<div style="left:896.00px;top:656.90px;font-family:'Liberation Mono';font-size:35px;line-height:35px;letter-spacing:-0.963px;white-space:pre;color:#000;-webkit-text-stroke:0.4px currentColor;"><span style="color:#000080;font-weight:bold">public</span> <span style="color:#000080;font-weight:bold">interface</span> HandlerExceptionResolver {</div>
<div style="left:896.00px;top:1216.90px;font-family:'Liberation Mono';font-size:35px;line-height:35px;letter-spacing:-0.963px;white-space:pre;color:#000;-webkit-text-stroke:0.4px currentColor;"><span style="color:#727272;font-style:italic">     <span style="display:inline-block;transform:translate(-4px,12px) scale(1.3)">*</span> </span><span style="color:#727272;font-style:italic;font-weight:bold;text-decoration:underline;text-decoration-thickness:2px;text-underline-offset:2px">@param</span> <span style="color:#3d3d3d;font-style:italic;font-weight:bold">handler</span><span style="color:#727272;font-style:italic"> the executed handler, or {</span><span style="color:#727272;font-style:italic;font-weight:bold;text-decoration:underline;text-decoration-thickness:2px;text-underline-offset:2px">@code</span><span style="color:#727272;font-style:italic"> null} if none chosen at the</span></div>
<div style="left:896.00px;top:1272.90px;font-family:'Liberation Mono';font-size:35px;line-height:35px;letter-spacing:-0.963px;white-space:pre;color:#000;-webkit-text-stroke:0.4px currentColor;"><span style="color:#727272;font-style:italic">     <span style="display:inline-block;transform:translate(-4px,12px) scale(1.3)">*</span> time of the exception (for example, if multipart resolution failed)</span></div>
<div style="left:896.00px;top:1328.90px;font-family:'Liberation Mono';font-size:35px;line-height:35px;letter-spacing:-0.963px;white-space:pre;color:#000;-webkit-text-stroke:0.4px currentColor;"><span style="color:#727272;font-style:italic">     <span style="display:inline-block;transform:translate(-4px,12px) scale(1.3)">*</span> </span><span style="color:#727272;font-style:italic;font-weight:bold;text-decoration:underline;text-decoration-thickness:2px;text-underline-offset:2px">@param</span> <span style="color:#3d3d3d;font-style:italic;font-weight:bold">ex</span><span style="color:#727272;font-style:italic"> the exception that got thrown during handler execution</span></div>
<div style="left:896.00px;top:1384.90px;font-family:'Liberation Mono';font-size:35px;line-height:35px;letter-spacing:-0.963px;white-space:pre;color:#000;-webkit-text-stroke:0.4px currentColor;"><span style="color:#727272;font-style:italic">     <span style="display:inline-block;transform:translate(-4px,12px) scale(1.3)">*</span> </span><span style="color:#727272;font-style:italic;font-weight:bold;text-decoration:underline;text-decoration-thickness:2px;text-underline-offset:2px">@return</span><span style="color:#727272;font-style:italic"> a corresponding {</span><span style="color:#727272;font-style:italic;font-weight:bold;text-decoration:underline;text-decoration-thickness:2px;text-underline-offset:2px">@code</span><span style="color:#727272;font-style:italic"> ModelAndView} to forward to,</span></div>
<div style="left:896.00px;top:1440.90px;font-family:'Liberation Mono';font-size:35px;line-height:35px;letter-spacing:-0.963px;white-space:pre;color:#000;-webkit-text-stroke:0.4px currentColor;"><span style="color:#727272;font-style:italic">     <span style="display:inline-block;transform:translate(-4px,12px) scale(1.3)">*</span> or {</span><span style="color:#727272;font-style:italic;font-weight:bold;text-decoration:underline;text-decoration-thickness:2px;text-underline-offset:2px">@code</span><span style="color:#727272;font-style:italic"> null} for default processing in the resolution chain</span></div>
<div style="left:896.00px;top:1496.90px;font-family:'Liberation Mono';font-size:35px;line-height:35px;letter-spacing:-0.963px;white-space:pre;color:#000;-webkit-text-stroke:0.4px currentColor;"><span style="color:#727272;font-style:italic">     <span style="display:inline-block;transform:translate(-4px,12px) scale(1.3)">*</span>/</span></div>
<div style="left:896.00px;top:1552.90px;font-family:'Liberation Mono';font-size:35px;line-height:35px;letter-spacing:-0.963px;white-space:pre;color:#000;-webkit-text-stroke:0.4px currentColor;"><span style="color:#808000">    @Nullable</span></div>
<div style="left:896.00px;top:1608.90px;font-family:'Liberation Mono';font-size:35px;line-height:35px;letter-spacing:-0.963px;white-space:pre;color:#000;-webkit-text-stroke:0.4px currentColor;">    ModelAndView resolveException(</div>
<div style="left:1222.5px;top:643px;width:491px;height:42px;border:7px solid #d0021b;border-radius:4px;"></div>
<div style="left:722.00px;top:154.42px;font-family:'Liberation Mono';font-size:33px;line-height:33px;letter-spacing:-1.303px;white-space:pre;color:#8a8a8a;-webkit-text-stroke:0.4px currentColor;transform:scaleX(0.9);transform-origin:18.5px 0;">27</div>
<div style="left:722.00px;top:210.42px;font-family:'Liberation Mono';font-size:33px;line-height:33px;letter-spacing:-1.303px;white-space:pre;color:#8a8a8a;-webkit-text-stroke:0.4px currentColor;transform:scaleX(0.9);transform-origin:18.5px 0;">28</div>
<div style="left:722.00px;top:266.42px;font-family:'Liberation Mono';font-size:33px;line-height:33px;letter-spacing:-1.303px;white-space:pre;color:#8a8a8a;-webkit-text-stroke:0.4px currentColor;transform:scaleX(0.9);transform-origin:18.5px 0;">29</div>
<div style="left:722.00px;top:322.42px;font-family:'Liberation Mono';font-size:33px;line-height:33px;letter-spacing:-1.303px;white-space:pre;color:#8a8a8a;-webkit-text-stroke:0.4px currentColor;transform:scaleX(0.9);transform-origin:18.5px 0;">30</div>
<div style="left:722.00px;top:378.42px;font-family:'Liberation Mono';font-size:33px;line-height:33px;letter-spacing:-1.303px;white-space:pre;color:#8a8a8a;-webkit-text-stroke:0.4px currentColor;transform:scaleX(0.9);transform-origin:18.5px 0;">31</div>
<div style="left:722.00px;top:434.42px;font-family:'Liberation Mono';font-size:33px;line-height:33px;letter-spacing:-1.303px;white-space:pre;color:#8a8a8a;-webkit-text-stroke:0.4px currentColor;transform:scaleX(0.9);transform-origin:18.5px 0;">32</div>
<div style="left:722.00px;top:490.42px;font-family:'Liberation Mono';font-size:33px;line-height:33px;letter-spacing:-1.303px;white-space:pre;color:#8a8a8a;-webkit-text-stroke:0.4px currentColor;transform:scaleX(0.9);transform-origin:18.5px 0;">33</div>
<div style="left:722.00px;top:546.42px;font-family:'Liberation Mono';font-size:33px;line-height:33px;letter-spacing:-1.303px;white-space:pre;color:#8a8a8a;-webkit-text-stroke:0.4px currentColor;transform:scaleX(0.9);transform-origin:18.5px 0;">34</div>
<div style="left:722.00px;top:602.42px;font-family:'Liberation Mono';font-size:33px;line-height:33px;letter-spacing:-1.303px;white-space:pre;color:#8a8a8a;-webkit-text-stroke:0.4px currentColor;transform:scaleX(0.9);transform-origin:18.5px 0;">35</div>
<div style="left:722.00px;top:658.42px;font-family:'Liberation Mono';font-size:33px;line-height:33px;letter-spacing:-1.303px;white-space:pre;color:#8a8a8a;-webkit-text-stroke:0.4px currentColor;transform:scaleX(0.9);transform-origin:18.5px 0;">36</div>
<div style="left:722.00px;top:714.42px;font-family:'Liberation Mono';font-size:33px;line-height:33px;letter-spacing:-1.303px;white-space:pre;color:#8a8a8a;-webkit-text-stroke:0.4px currentColor;transform:scaleX(0.9);transform-origin:18.5px 0;">37</div>
<div style="left:722.00px;top:1218.42px;font-family:'Liberation Mono';font-size:33px;line-height:33px;letter-spacing:-1.303px;white-space:pre;color:#8a8a8a;-webkit-text-stroke:0.4px currentColor;transform:scaleX(0.9);transform-origin:18.5px 0;">46</div>
<div style="left:722.00px;top:1274.42px;font-family:'Liberation Mono';font-size:33px;line-height:33px;letter-spacing:-1.303px;white-space:pre;color:#8a8a8a;-webkit-text-stroke:0.4px currentColor;transform:scaleX(0.9);transform-origin:18.5px 0;">47</div>
<div style="left:722.00px;top:1330.42px;font-family:'Liberation Mono';font-size:33px;line-height:33px;letter-spacing:-1.303px;white-space:pre;color:#8a8a8a;-webkit-text-stroke:0.4px currentColor;transform:scaleX(0.9);transform-origin:18.5px 0;">48</div>
<div style="left:722.00px;top:1386.42px;font-family:'Liberation Mono';font-size:33px;line-height:33px;letter-spacing:-1.303px;white-space:pre;color:#8a8a8a;-webkit-text-stroke:0.4px currentColor;transform:scaleX(0.9);transform-origin:18.5px 0;">49</div>
<div style="left:722.00px;top:1442.42px;font-family:'Liberation Mono';font-size:33px;line-height:33px;letter-spacing:-1.303px;white-space:pre;color:#8a8a8a;-webkit-text-stroke:0.4px currentColor;transform:scaleX(0.9);transform-origin:18.5px 0;">50</div>
<div style="left:722.00px;top:1498.42px;font-family:'Liberation Mono';font-size:33px;line-height:33px;letter-spacing:-1.303px;white-space:pre;color:#8a8a8a;-webkit-text-stroke:0.4px currentColor;transform:scaleX(0.9);transform-origin:18.5px 0;">51</div>
<div style="left:722.00px;top:1554.42px;font-family:'Liberation Mono';font-size:33px;line-height:33px;letter-spacing:-1.303px;white-space:pre;color:#8a8a8a;-webkit-text-stroke:0.4px currentColor;transform:scaleX(0.9);transform-origin:18.5px 0;">52</div>
<div style="left:722.00px;top:1610.42px;font-family:'Liberation Mono';font-size:33px;line-height:33px;letter-spacing:-1.303px;white-space:pre;color:#8a8a8a;-webkit-text-stroke:0.4px currentColor;transform:scaleX(0.9);transform-origin:18.5px 0;">53</div>
<svg style="left:775px;top:652px;" width="34" height="34" viewBox="0 0 34 34"><circle cx="14" cy="14" r="12" fill="#68b760"/><path d="M5 20 C8 10 16 6 24 6" stroke="#efefef" stroke-width="2" fill="none"/><circle cx="22" cy="22" r="10" fill="#5ec4d6"/><path d="M25 19 A4 4 0 1 0 25 25" fill="none" stroke="#3b3b3b" stroke-width="2"/></svg>
<svg style="left:813px;top:654px;" width="32" height="32" viewBox="0 0 32 32"><circle cx="10.5" cy="15" r="10" fill="#58b25a"/><path d="M8 10 h5 M10.5 10 v10 M8 20 h5" stroke="#333" stroke-width="2" fill="none"/><path d="M27 0 V28" stroke="#4a4a4a" stroke-width="2.5"/><path d="M21 22 L27 30 L33 22 Z" fill="#4a4a4a"/></svg>
<svg style="left:813px;top:1606px;" width="32" height="32" viewBox="0 0 32 32"><circle cx="10.5" cy="15" r="10" fill="#58b25a"/><path d="M8 10 h5 M10.5 10 v10 M8 20 h5" stroke="#333" stroke-width="2" fill="none"/><path d="M27 0 V28" stroke="#4a4a4a" stroke-width="2.5"/><path d="M21 22 L27 30 L33 22 Z" fill="#4a4a4a"/></svg>
<svg style="left:868px;top:600px;" width="24" height="28" viewBox="0 0 24 28"><path d="M2 27 V11 L12 1.5 L22 11 V27 Z" fill="#fff" stroke="#c2c2c2" stroke-width="2"/><path d="M7 17 H17" stroke="#c2c2c2" stroke-width="2"/></svg>
<svg style="left:868px;top:1496px;" width="24" height="28" viewBox="0 0 24 28"><path d="M2 27 V11 L12 1.5 L22 11 V27 Z" fill="#fff" stroke="#c2c2c2" stroke-width="2"/><path d="M7 17 H17" stroke="#c2c2c2" stroke-width="2"/></svg>
<div style="left:2994px;top:477px;width:18px;height:880px;border-radius:9px;background:#bdbdbd;"></div>
<svg style="left:2986px;top:141px;" width="30" height="25" viewBox="0 0 30 25"><path d="M2 12 L10 20 L27 3" fill="none" stroke="#31a14e" stroke-width="5"/></svg>
<div style="left:480px;top:728px;width:2600px;height:511px;background:#fefedc;box-shadow:0 6px 30px rgba(0,0,0,0.32);"></div>
<div style="left:480px;top:728px;width:2592px;height:71px;background:#e0e0e0;"></div>
<div style="left:480px;top:728px;width:2592px;height:1px;background:#c4c4c4;"></div>
<div style="left:1478.30px;top:746.65px;font-family:'Liberation Sans';font-size:31px;line-height:31px;font-weight:normal;font-style:normal;color:#000;letter-spacing:0.602px;white-space:pre;">Choose Implementation of </div>
<div style="left:1866.75px;top:746.65px;font-family:'Liberation Sans';font-size:31px;line-height:31px;font-weight:bold;font-style:normal;color:#000;letter-spacing:0.687px;white-space:pre;">HandlerExceptionResolver</div>
<div style="left:2287.00px;top:746.65px;font-family:'Liberation Sans';font-size:31px;line-height:31px;font-weight:normal;font-style:normal;color:#000;letter-spacing:1.281px;white-space:pre;">(9 found)</div>
<div style="left:0;top:0;width:3072px;height:1866px;clip-path:inset(799px 0px 627px 480px);">
<div style="left:480px;top:1049px;width:2592px;height:50px;background:#005fb8;"></div>
<svg style="left:497.70000000000005px;top:805px;" width="44" height="44" viewBox="0 0 44 44"><circle cx="20" cy="20" r="17" fill="#b4b4b4"/><circle cx="20" cy="20" r="13.5" fill="#fefedc"/><rect x="9" y="3" width="22" height="34" rx="4" fill="#62c5d8"/><path d="M24.6 15.8 A6.4 6.6 0 1 0 24.6 24.4" fill="none" stroke="#3b3b3b" stroke-width="2.6"/></svg>
<div style="left:547.00px;top:809.66px;font-family:'Liberation Mono';font-size:34px;line-height:34px;letter-spacing:-1.253px;white-space:pre;color:#000;-webkit-text-stroke:0.4px currentColor;"><span style="color:#000">AbstractHandlerExceptionResolver</span> <span style="color:#787878">(org.springframework.web.servlet.handler)</span></div>
<svg style="left:497.70000000000005px;top:855px;" width="44" height="44" viewBox="0 0 44 44"><circle cx="20" cy="20" r="17" fill="#b4b4b4"/><circle cx="20" cy="20" r="13.5" fill="#fefedc"/><rect x="9" y="3" width="22" height="34" rx="4" fill="#62c5d8"/><path d="M24.6 15.8 A6.4 6.6 0 1 0 24.6 24.4" fill="none" stroke="#3b3b3b" stroke-width="2.6"/></svg>
<div style="left:547.00px;top:859.66px;font-family:'Liberation Mono';font-size:34px;line-height:34px;letter-spacing:-1.253px;white-space:pre;color:#000;-webkit-text-stroke:0.4px currentColor;"><span style="color:#000">AbstractHandlerMethodExceptionResolver</span> <span style="color:#787878">(org.springframework.web.servlet.handler)</span></div>
<svg style="left:497.70000000000005px;top:905px;" width="44" height="44" viewBox="0 0 44 44"><circle cx="20" cy="20" r="17" fill="#62c5d8"/><path d="M24.6 15.8 A6.4 6.6 0 1 0 24.6 24.4" fill="none" stroke="#3b3b3b" stroke-width="2.6"/></svg>
<div style="left:547.00px;top:909.66px;font-family:'Liberation Mono';font-size:34px;line-height:34px;letter-spacing:-1.253px;white-space:pre;color:#000;-webkit-text-stroke:0.4px currentColor;"><span style="color:#000">CompositeHandlerExceptionResolver</span> <span style="color:#787878">(org.springframework.boot.actuate.autoconfigure.web.servlet)</span></div>
<svg style="left:497.70000000000005px;top:955px;" width="44" height="44" viewBox="0 0 44 44"><circle cx="20" cy="20" r="17" fill="#62c5d8"/><path d="M24.6 15.8 A6.4 6.6 0 1 0 24.6 24.4" fill="none" stroke="#3b3b3b" stroke-width="2.6"/></svg>
<div style="left:547.00px;top:959.66px;font-family:'Liberation Mono';font-size:34px;line-height:34px;letter-spacing:-1.253px;white-space:pre;color:#000;-webkit-text-stroke:0.4px currentColor;"><span style="color:#000">DefaultErrorAttributes</span> <span style="color:#787878">(org.springframework.boot.web.servlet.error)</span></div>
<svg style="left:497.70000000000005px;top:1005px;" width="44" height="44" viewBox="0 0 44 44"><circle cx="20" cy="20" r="17" fill="#62c5d8"/><path d="M24.6 15.8 A6.4 6.6 0 1 0 24.6 24.4" fill="none" stroke="#3b3b3b" stroke-width="2.6"/></svg>
<div style="left:547.00px;top:1009.66px;font-family:'Liberation Mono';font-size:34px;line-height:34px;letter-spacing:-1.253px;white-space:pre;color:#000;-webkit-text-stroke:0.4px currentColor;"><span style="color:#000">DefaultHandlerExceptionResolver</span> <span style="color:#787878">(org.springframework.web.servlet.mvc.support)</span></div>
<svg style="left:497.70000000000005px;top:1055px;" width="44" height="44" viewBox="0 0 44 44"><circle cx="20" cy="20" r="17" fill="#2f94d0"/><path d="M24.6 15.8 A6.4 6.6 0 1 0 24.6 24.4" fill="none" stroke="#3b3b3b" stroke-width="2.6"/></svg>
<div style="left:547.00px;top:1059.66px;font-family:'Liberation Mono';font-size:34px;line-height:34px;letter-spacing:-1.253px;white-space:pre;color:#000;-webkit-text-stroke:0.4px currentColor;"><span style="color:#fff">ExceptionHandlerExceptionResolver (org.springframework.web.servlet.mvc.method.annotation)</span></div>
<svg style="left:497.70000000000005px;top:1105px;" width="44" height="44" viewBox="0 0 44 44"><circle cx="20" cy="20" r="17" fill="#62c5d8"/><path d="M24.6 15.8 A6.4 6.6 0 1 0 24.6 24.4" fill="none" stroke="#3b3b3b" stroke-width="2.6"/></svg>
<div style="left:547.00px;top:1109.66px;font-family:'Liberation Mono';font-size:34px;line-height:34px;letter-spacing:-1.253px;white-space:pre;color:#000;-webkit-text-stroke:0.4px currentColor;"><span style="color:#000">HandlerExceptionResolverComposite</span> <span style="color:#787878">(org.springframework.web.servlet.handler)</span></div>
<svg style="left:497.70000000000005px;top:1155px;" width="44" height="44" viewBox="0 0 44 44"><circle cx="20" cy="20" r="17" fill="#62c5d8"/><path d="M24.6 15.8 A6.4 6.6 0 1 0 24.6 24.4" fill="none" stroke="#3b3b3b" stroke-width="2.6"/></svg>
<div style="left:547.00px;top:1159.66px;font-family:'Liberation Mono';font-size:34px;line-height:34px;letter-spacing:-1.253px;white-space:pre;color:#000;-webkit-text-stroke:0.4px currentColor;"><span style="color:#000">ResponseStatusExceptionResolver</span> <span style="color:#787878">(org.springframework.web.servlet.mvc.annotation)</span></div>
<svg style="left:497.70000000000005px;top:1205px;" width="44" height="44" viewBox="0 0 44 44"><circle cx="20" cy="20" r="17" fill="#62c5d8"/><path d="M24.6 15.8 A6.4 6.6 0 1 0 24.6 24.4" fill="none" stroke="#3b3b3b" stroke-width="2.6"/></svg>
<div style="left:547.00px;top:1209.66px;font-family:'Liberation Mono';font-size:34px;line-height:34px;letter-spacing:-1.253px;white-space:pre;color:#000;-webkit-text-stroke:0.4px currentColor;"><span style="color:#000">SimpleMappingExceptionResolver</span> <span style="color:#787878">(org.springframework.web.servlet.handler)</span></div>
<div style="left:2399.00px;top:909.66px;font-family:'Liberation Mono';font-size:34px;line-height:34px;letter-spacing:-1.253px;white-space:pre;color:#000;-webkit-text-stroke:0.4px currentColor;"><span style="color:#787878">Maven: org.springframework.boot:spring-boot-actuator-autoconfigure:2.5.4</span></div>
<div style="left:480px;top:1238px;width:2592px;height:1px;background:rgba(0,0,0,0.28);"></div>
<div style="left:527px;top:1055px;width:653px;height:34px;border:7px solid #d0021b;border-radius:4px;"></div>
</div>
<div style="left:67.00px;top:1677.72px;font-family:'Liberation Sans';font-size:29.5px;line-height:29.5px;font-weight:normal;font-style:normal;color:#1a1a1a;letter-spacing:0.741px;white-space:pre;">Terminal:</div>
<div style="left:239.60px;top:1677.72px;font-family:'Liberation Sans';font-size:29.5px;line-height:29.5px;font-weight:normal;font-style:normal;color:#1a1a1a;letter-spacing:0.508px;white-space:pre;">Local</div>
<svg style="left:331px;top:1684px;" width="19" height="19" viewBox="0 0 19 19"><path d="M1.5 1.5 L17.5 17.5 M17.5 1.5 L1.5 17.5" stroke="#a8a8a8" stroke-width="2.2"/></svg>
<svg style="left:405px;top:1679px;" width="26" height="25" viewBox="0 0 26 25"><path d="M13 0 V25 M0 12.5 H26" stroke="#6e6e6e" stroke-width="4.5"/></svg>
<div style="left:210px;top:1719px;width:168px;height:5.5px;background:#8a9bb0;"></div>
<svg style="left:2902px;top:1675px;" width="33" height="33" viewBox="0 0 33 33"><path d="M28.16 12.89 L32.67 13.22 L32.67 19.78 L28.16 20.11 L27.30 22.20 L30.25 25.62 L25.62 30.25 L22.20 27.30 L20.11 28.16 L19.78 32.67 L13.22 32.67 L12.89 28.16 L10.80 27.30 L7.38 30.25 L2.75 25.62 L5.70 22.20 L4.84 20.11 L0.33 19.78 L0.33 13.22 L4.84 12.89 L5.70 10.80 L2.75 7.38 L7.38 2.75 L10.80 5.70 L12.89 4.84 L13.22 0.33 L19.78 0.33 L20.11 4.84 L22.20 5.70 L25.62 2.75 L30.25 7.38 L27.30 10.80 Z" fill="#6e6e6e"/><circle cx="16.5" cy="16.5" r="4.95" fill="#efefef"/></svg>
<div style="left:2971px;top:1688px;width:30px;height:5.5px;background:#6e6e6e;"></div>
<div style="left:59.00px;top:1738.92px;font-family:'Liberation Mono';font-size:33px;line-height:33px;letter-spacing:0.147px;white-space:pre;color:#000;-webkit-text-stroke:0.4px currentColor;">pdai@MacBook-Pro tech-pdai-spring-demos % </div>
<div style="left:900px;top:1726px;width:16px;height:45px;border:2px solid #000;"></div>
<div style="left:116.50px;top:1820.33px;font-family:'Liberation Sans';font-size:29.5px;line-height:29.5px;font-weight:normal;font-style:normal;color:#111;letter-spacing:0.390px;white-space:pre;"><span style="text-decoration:underline;text-decoration-thickness:2px;text-underline-offset:4px">9</span>: Git</div>
<div style="left:279.00px;top:1820.33px;font-family:'Liberation Sans';font-size:29.5px;line-height:29.5px;font-weight:normal;font-style:normal;color:#111;letter-spacing:-0.298px;white-space:pre;"><span style="text-decoration:underline;text-decoration-thickness:2px;text-underline-offset:4px">6</span>: TODO</div>
<div style="left:492.50px;top:1820.33px;font-family:'Liberation Sans';font-size:29.5px;line-height:29.5px;font-weight:normal;font-style:normal;color:#111;letter-spacing:-0.004px;white-space:pre;">Java Enterprise</div>
<div style="left:793.00px;top:1820.33px;font-family:'Liberation Sans';font-size:29.5px;line-height:29.5px;font-weight:normal;font-style:normal;color:#111;letter-spacing:0.243px;white-space:pre;"><span style="text-decoration:underline;text-decoration-thickness:2px;text-underline-offset:4px">8</span>: Services</div>
<div style="left:1034.60px;top:1820.33px;font-family:'Liberation Sans';font-size:29.5px;line-height:29.5px;font-weight:normal;font-style:normal;color:#111;letter-spacing:0.282px;white-space:pre;">SpotBugs</div>
<div style="left:1253.00px;top:1820.33px;font-family:'Liberation Sans';font-size:29.5px;line-height:29.5px;font-weight:normal;font-style:normal;color:#111;letter-spacing:0.377px;white-space:pre;">Spring</div>
<div style="left:1430.00px;top:1820.33px;font-family:'Liberation Sans';font-size:29.5px;line-height:29.5px;font-weight:normal;font-style:normal;color:#111;letter-spacing:0.245px;white-space:pre;">CheckStyle</div>
<div style="left:1679.50px;top:1820.33px;font-family:'Liberation Sans';font-size:29.5px;line-height:29.5px;font-weight:normal;font-style:normal;color:#111;letter-spacing:-0.117px;white-space:pre;">Sequence Diagram</div>
<div style="left:2027.00px;top:1820.33px;font-family:'Liberation Sans';font-size:29.5px;line-height:29.5px;font-weight:normal;font-style:normal;color:#111;letter-spacing:0.114px;white-space:pre;">SonarLint</div>
<div style="left:2246.00px;top:1820.33px;font-family:'Liberation Sans';font-size:29.5px;line-height:29.5px;font-weight:normal;font-style:normal;color:#111;letter-spacing:0.440px;white-space:pre;">Terminal</div>
<div style="left:2450.00px;top:1820.33px;font-family:'Liberation Sans';font-size:29.5px;line-height:29.5px;font-weight:normal;font-style:normal;color:#111;letter-spacing:0.452px;white-space:pre;">Build</div>
<div style="left:2635.00px;top:1820.33px;font-family:'Liberation Sans';font-size:29.5px;line-height:29.5px;font-weight:normal;font-style:normal;color:#111;letter-spacing:-0.056px;white-space:pre;">Event Log</div>
<div style="left:2868.40px;top:1820.33px;font-family:'Liberation Sans';font-size:29.5px;line-height:29.5px;font-weight:normal;font-style:normal;color:#111;letter-spacing:-0.637px;white-space:pre;">VisualGC</div>
<svg style="left:0px;top:1806px;" width="3072" height="60" viewBox="0 0 3072 60"><rect x="82" y="14" width="5" height="25" fill="#5f615d"/><path d="M85 33 H101 V22" fill="none" stroke="#5f615d" stroke-width="4.5"/><path d="M93 24 H109 L101 13 Z" fill="#5f615d"/><g fill="#5f615d"><rect x="244.7" y="15" width="5" height="5.4"/><rect x="253.7" y="15" width="15" height="5.4"/><rect x="244.7" y="22.5" width="5" height="5.1"/><rect x="253.7" y="22.5" width="15" height="5.1"/><rect x="244.7" y="30" width="5" height="5.4"/><rect x="253.7" y="30" width="15" height="5.4"/></g><path d="M454.3 13.5 H479 V25 H462.4 V38 H454.3 Z" fill="#5f615d"/><rect x="462.4" y="25.5" width="21" height="16.5" fill="#5f615d"/><text x="464.5" y="40" font-family="Liberation Sans" font-weight="bold" font-size="14" fill="#efefef">EE</text><path d="M761 13.5 H777.5 L785.2 26.2 L777.5 39 H761 L753.7 26.2 Z" fill="#5f615d"/><path d="M765 19 L776 26.2 L765 33.5 Z" fill="#efefef"/></svg>
<svg style="left:995px;top:1817px;" width="32" height="32" viewBox="0 0 32 32"><ellipse cx="16" cy="18" rx="9" ry="12" fill="#5f615d"/><path d="M2 9 H30 M0 18 H32 M2 27 H30 M10 2 L13 7 M22 2 L19 7" stroke="#5f615d" stroke-width="3"/><path d="M16 9 V30" stroke="#efefef" stroke-width="2"/></svg>
<svg style="left:1214px;top:1817px;" width="32" height="30" viewBox="0 0 32 30"><path d="M2 28 C0 16 8 6 20 6 C25 6 29 3 31 0 C33 14 28 26 16 28 C10 29 6 29 2 28 Z" fill="#5f615d"/><path d="M4 26 C10 20 16 16 24 12" stroke="#efefef" stroke-width="2" fill="none"/></svg>
<svg style="left:1392px;top:1817px;" width="31" height="34" viewBox="0 0 31 34"><text x="0" y="20" font-family="Liberation Sans" font-weight="bold" font-size="21" fill="#5f615d">CS</text><path d="M1 27 Q4 23 7 27 T13 27 T19 27 T25 27 T31 27" stroke="#d03030" stroke-width="2" fill="none"/></svg>
<svg style="left:1639px;top:1815px;" width="33" height="34" viewBox="0 0 33 34"><rect x="9" y="4" width="10" height="26" fill="#e0a27a" stroke="#5f615d" stroke-width="2.5"/><path d="M0 17 H31 M5 2 V32" stroke="#5f615d" stroke-width="3"/><path d="M26 12 L33 17 L26 22 Z" fill="#5f615d"/></svg>
<svg style="left:1988px;top:1816px;" width="33" height="33" viewBox="0 0 33 33"><circle cx="16.5" cy="16.5" r="14.5" fill="none" stroke="#d9302c" stroke-width="3.5"/><path d="M3 16.5 Q6 11 9 16.5 T15 16.5 T21 16.5 T27 16.5 T31 16.5" stroke="#d9302c" stroke-width="3" fill="none"/></svg>
<svg style="left:2208px;top:1819px;" width="28" height="26" viewBox="0 0 28 26"><rect x="0" y="0" width="28" height="26" fill="#4f514d"/><path d="M5 6 L11 11 L5 16" stroke="#afafaf" stroke-width="2.5" fill="none"/><path d="M13 19 H22" stroke="#afafaf" stroke-width="2.5"/></svg>
<svg style="left:2380px;top:1790px;" width="80" height="70" viewBox="0 0 80 70"><g transform="translate(32,29) scale(0.8) translate(-1631.75,-14)"><path d="M1631.75 27.3 L1645.1 14 L1654.2 14.3 L1647 21.5 L1655.8 29 L1669.9 42.2 L1663.8 48 L1650.7 35.6 L1650.4 33.1 L1643.5 26.2 L1637.6 32.2 Z" fill="#5f615d"/></g></svg>
<svg style="left:2596px;top:1817px;" width="32" height="33" viewBox="0 0 32 33"><path d="M15.5 0 A15.5 15.5 0 1 0 31 16 V33 H15.5 Z" fill="#2e9f4d"/><circle cx="15.5" cy="16" r="15.5" fill="#2e9f4d"/><text x="10" y="26" font-family="Liberation Sans" font-weight="bold" font-size="22" fill="#fff">1</text></svg>
<svg style="left:2819px;top:1813px;" width="41" height="38" viewBox="0 0 41 38"><rect x="1.5" y="1.5" width="38" height="35" fill="#f4f4f4" stroke="#7a7a72" stroke-width="3"/><rect x="5" y="5" width="31" height="4" fill="#6c8ab0"/><path d="M5 16 H36 M5 27 H36" stroke="#56c052" stroke-width="4"/><path d="M14 9 V34 M22 9 V34 M30 9 V34" stroke="#ddd" stroke-width="1.5"/></svg>
</body></html>
